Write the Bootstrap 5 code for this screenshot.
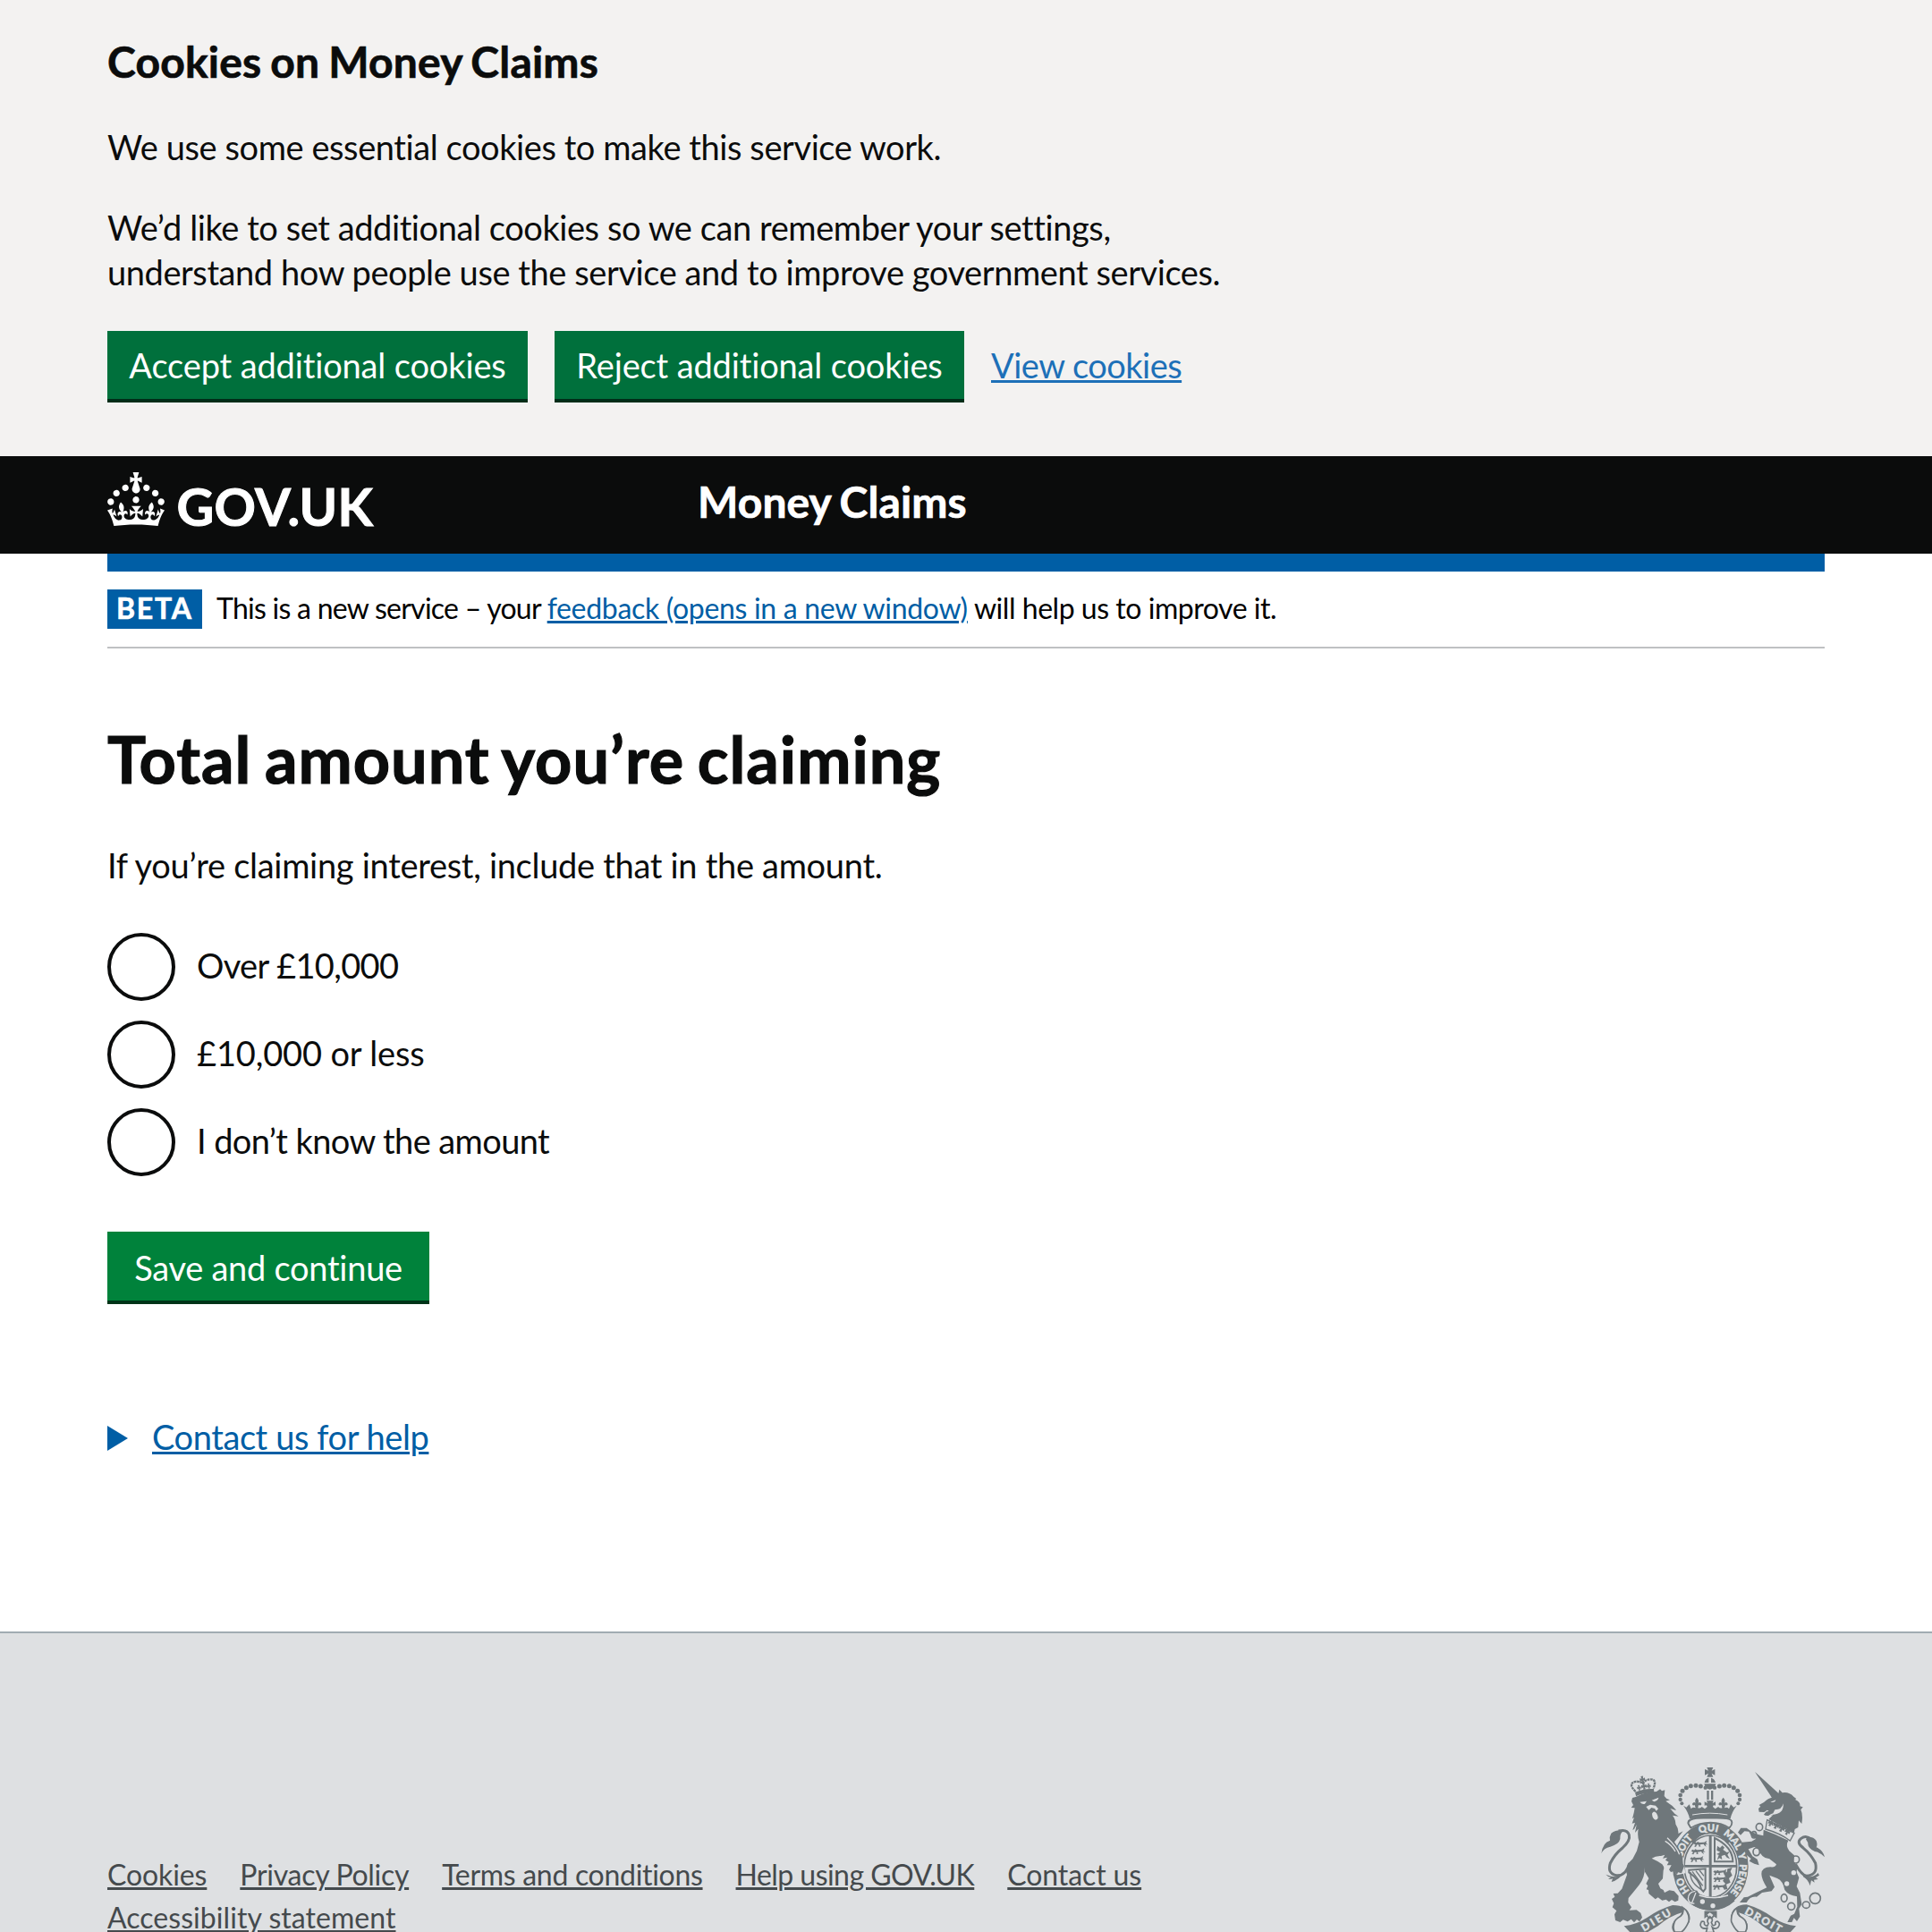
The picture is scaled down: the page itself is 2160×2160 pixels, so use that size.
<!DOCTYPE html>
<html lang="en">
<head>
<meta charset="utf-8">
<meta name="viewport" content="width=device-width, initial-scale=1">
<title>Total amount you’re claiming - Money Claims</title>
<link rel="stylesheet" href="https://cdn.jsdelivr.net/npm/bootstrap@5.3.0/dist/css/bootstrap.min.css">
<style>
  html, body { height: 2160px; overflow: hidden; }
  body { font-family: Lato, "Noto Sans", sans-serif; font-size: 38px; line-height: 50px; color: #0b0c0c; background: #fff; letter-spacing: -.42px; }
  p { margin: 0; }
  a { text-decoration-thickness: 3px; text-underline-offset: 2px; color: #005ea5; }
  .page-width { padding: 0 120px; }
  .cookie-area { background: #f3f2f1; height: 510px; padding-top: 39px; }
  .cookie-title { font-size: 48px; line-height: 60px; font-weight: 700; letter-spacing: .2px; word-spacing: -2px; margin: 0 0 40px; -webkit-text-stroke: .7px; }
  .cookie-copy { margin-bottom: 40px; }
  .cookie-actions { margin-top: 41px; gap: 30px; }
  .btn-gov { --bs-btn-color: #fff; --bs-btn-bg: #00703c; --bs-btn-hover-bg: #005a30; --bs-btn-hover-color: #fff; --bs-btn-border-radius: 0; --bs-btn-line-height: 50px; --bs-btn-font-size: 38px; border: 0; border-bottom: 4px solid #002d18; height: 80px; padding: 13px 0 13px; letter-spacing: -.14px; }
  .btn-accept { width: 470px; }
  .btn-reject { width: 458px; }
  .btn-save { --bs-btn-bg: #00823b; border-bottom-color: #003418; width: 360px; height: 81px; margin-top: 62px; padding: 15px 0 12px; letter-spacing: -.27px; }
  .view-link { color: #1d70b8; letter-spacing: -.52px; line-height: 50px; margin-top: 13px; }
  .gov-header { background: #0b0c0c; height: 109px; }
  .brand-col { width: 660px; padding-top: 18px; }
  .brand-col svg { overflow: visible; }
  .service-name { color: #fff; font-size: 48px; line-height: 60px; font-weight: 700; letter-spacing: .1px; word-spacing: -2px; padding-top: 21px; -webkit-text-stroke: .7px; }
  .blue-bar { height: 20px; background: #005ea5; }
  .phase-banner { padding: 20px 0; border-bottom: 2px solid #bfc1c3; font-size: 32px; line-height: 40px; color: #000; }
  .phase-banner p { padding-top: 1px; letter-spacing: -.46px; }
  .phase-tag { width: 106px; height: 44px; padding-top: 1px; background: #005ea5; color: #fff; font-weight: 700; letter-spacing: 1.8px; padding-left: 10px; margin-right: 16px; -webkit-text-stroke: .6px; }
  .phase-lead { letter-spacing: -.74px; }
  .phase-link { letter-spacing: -.32px; }
  .page-title { font-size: 72px; line-height: 80px; font-weight: 700; letter-spacing: 1px; word-spacing: -4px; margin: 83px 0 54px; -webkit-text-stroke: 1.2px; }
  .intro { letter-spacing: -.3px; margin-bottom: 51px; }
  .radio-stack { gap: 22px; }
  .radio-row { height: 76px; gap: 24px; }
  .radio-row .form-check-input { width: 76px; height: 76px; margin: 0; border: 4px solid #0b0c0c; background: #fff; flex: none; }
  .radio-row label { margin-bottom: 4px; }
  .label-over { letter-spacing: -.65px; }
  .label-less { letter-spacing: -.15px; }
  .label-unknown { letter-spacing: -.6px; }
  .help-row { margin-top: 123px; margin-bottom: 193px; }
  .help-row svg { margin-top: 4px; margin-right: 27px; }
  .gov-footer { background: #dee0e2; border-top: 2px solid #a1acb2; height: 336px; }
  .footer-nav { width: 1400px; padding-top: 246px; column-gap: 37px; font-size: 32px; line-height: 48px; letter-spacing: -.3px; }
  .footer-nav a { color: #454a4d; }
  .footer-nav .open-set { letter-spacing: -.1px; }
  .footer-nav .tight-set { letter-spacing: -.54px; }
  .footer-nav .wide-set { letter-spacing: .05px; }
  .crest { margin-top: 150px; overflow: visible; }
</style>
<script src="https://cdn.jsdelivr.net/npm/bootstrap@5.3.0/dist/js/bootstrap.bundle.min.js"></script>
</head>
<body>
<section class="cookie-area page-width" aria-label="Cookies on Money Claims">
  <h2 class="cookie-title">Cookies on Money Claims</h2>
  <p class="cookie-copy">We use some essential cookies to make this service work.</p>
  <p>We’d like to set additional cookies so we can remember your settings,<br>understand how people use the service and to improve government services.</p>
  <div class="cookie-actions d-flex align-items-start">
    <button class="btn btn-gov btn-accept" type="button">Accept additional cookies</button>
    <button class="btn btn-gov btn-reject" type="button">Reject additional cookies</button>
    <a class="view-link" href="#">View cookies</a>
  </div>
</section>

<header class="gov-header page-width d-flex align-items-start">
  <div class="brand-col">
    <svg class="d-block" width="304" height="66" viewBox="0 0 304 66" fill="#fff" role="img" aria-label="GOV.UK">
      <g transform="scale(2)"><path d="M22.6 10.4c-1 .4-2-.1-2.4-1-.4-.9.1-2 1-2.4.9-.4 2 .1 2.4 1s-.1 2-1 2.4m-5.9 6.7c-.9.4-2-.1-2.4-1-.4-.9.1-2 1-2.4.9-.4 2 .1 2.4 1s-.1 2-1 2.4m10.8-3.7c-1 .4-2-.1-2.4-1-.4-.9.1-2 1-2.4.9-.4 2 .1 2.4 1s0 2-1 2.4m3.3 4.8c-1 .4-2-.1-2.4-1-.4-.9.1-2 1-2.4.9-.4 2 .1 2.4 1s-.1 2-1 2.4M17 4.7l2.3 1.2V2.5l-2.3.7-.2-.2.9-3h-3.4l.9 3-.2.2c-.1.1-2.3-.7-2.3-.7v3.4L15 4.7c.1.1.1.2.2.2l-1.3 4c-.1.2-.1.4-.1.6 0 1.1.8 2 1.9 2.2h.7c1-.2 1.9-1.1 1.9-2.1 0-.2 0-.4-.1-.6l-1.3-4c-.1-.2 0-.2.1-.3m-7.6 5.7c.9.4 2-.1 2.4-1 .4-.9-.1-2-1-2.4-.9-.4-2 .1-2.4 1s0 2 1 2.4m-5 3c.9.4 2-.1 2.4-1 .4-.9-.1-2-1-2.4-.9-.4-2 .1-2.4 1s.1 2 1 2.4m-3.2 4.8c.9.4 2-.1 2.4-1 .4-.9-.1-2-1-2.4-.9-.4-2 .1-2.4 1s0 2 1 2.4m14.8 11c4.4 0 8.6.3 12.3.8 1.1-4.5 2.4-7 3.7-8.8l-2.5-.9c.2 1.3.3 1.9 0 2.7-.4-.4-.8-1.1-1.1-2.3l-1.2 4c.7-.5 1.3-.8 2-.9-1.1 2.5-2.6 3.1-3.5 3-1.1-.2-1.7-1.2-1.5-2.1.3-1.2 1.5-1.5 2.1-.1 1.1-2.3-.8-3-2-2.3 1.9-1.9 2.1-3.5.6-5.6-2.1 1.6-2.1 3.2-1.2 5.5-1.2-1.4-3.2-.6-2.5 1.6.9-1.4 2.1-.5 1.9.8-.2 1.1-1.7 2.1-3.5 1.9-2.7-.2-2.9-2.1-2.9-3.6.7-.1 1.9.5 2.9 1.9l.4-4.3c-1.1 1.1-2.1 1.4-3.2 1.4.4-1.2 2.1-3 2.1-3h-5.4s1.7 1.9 2.1 3c-1.1 0-2.1-.2-3.2-1.4l.4 4.3c1-1.4 2.2-2 2.9-1.9-.1 1.5-.2 3.4-2.9 3.6-1.9.2-3.4-.8-3.5-1.9-.2-1.3 1-2.2 1.9-.8.7-2.3-1.2-3-2.5-1.6.9-2.2.9-3.9-1.2-5.5-1.5 2-1.3 3.7.6 5.6-1.2-.7-3.1 0-2 2.3.6-1.4 1.8-1.1 2.1.1.2.9-.3 1.9-1.5 2.1-.9.2-2.4-.5-3.5-3 .6 0 1.2.3 2 .9l-1.2-4c-.3 1.1-.7 1.9-1.1 2.3-.3-.8-.2-1.4 0-2.7l-2.9.9C1.3 23 2.6 25.5 3.7 30c3.7-.5 7.9-.8 12.3-.8"/></g>
      <text x="77.5" y="60" font-family="Lato, sans-serif" font-weight="700" font-size="57.5" textLength="219" stroke="#fff" stroke-width="1">GOV.UK</text>
    </svg>
  </div>
  <div class="service-name">Money Claims</div>
</header>

<main class="page-width">
  <div class="blue-bar"></div>
  <div class="phase-banner d-flex align-items-start">
    <strong class="phase-tag">BETA</strong>
    <p><span class="phase-lead">This is a new service – your </span><a class="phase-link" href="#">feedback (opens in a new window)</a> will help us to improve it.</p>
  </div>
  <h1 class="page-title">Total amount you’re claiming</h1>
  <p class="intro">If you’re claiming interest, include that in the amount.</p>
  <form>
    <div class="radio-stack d-flex flex-column">
      <div class="radio-row d-flex align-items-center"><input class="form-check-input" type="radio" name="amount" id="over"><label class="label-over" for="over">Over £10,000</label></div>
      <div class="radio-row d-flex align-items-center"><input class="form-check-input" type="radio" name="amount" id="less"><label class="label-less" for="less">£10,000 or less</label></div>
      <div class="radio-row d-flex align-items-center"><input class="form-check-input" type="radio" name="amount" id="unknown"><label class="label-unknown" for="unknown">I don’t know the amount</label></div>
    </div>
    <button class="btn btn-gov btn-save d-block" type="button">Save and continue</button>
  </form>
  <div class="help-row d-flex align-items-center">
    <svg width="23" height="28" viewBox="0 0 23 28"><path d="M0 0L23 14L0 28z" fill="#005ea5"/></svg>
    <a href="#">Contact us for help</a>
  </div>
</main>

<footer class="gov-footer page-width d-flex justify-content-between align-items-start">
  <nav class="footer-nav d-flex flex-wrap">
    <a class="open-set" href="#">Cookies</a><a href="#">Privacy Policy</a><a href="#">Terms and conditions</a><a class="tight-set" href="#">Help using GOV.UK</a><a class="open-set" href="#">Contact us</a><a class="wide-set" href="#">Accessibility statement</a>
  </nav>
  <svg class="crest" width="250" height="184" viewBox="60 48 750 552" fill="#6f777b" role="img" aria-label="Royal coat of arms">
    <defs>
      <path id="garterLine" d="M427 498A98 118 0 0 1 427 262A98 118 0 0 1 427 498"/>
      <g id="halfCrown">
        <circle cx="410" cy="116" r="6.5"/><circle cx="394" cy="111" r="7.5"/><circle cx="378" cy="109" r="7.5"/><circle cx="361" cy="110" r="7.5"/><circle cx="346" cy="116" r="7.5"/><circle cx="333" cy="127" r="7.5"/><circle cx="326" cy="141" r="7"/><circle cx="326" cy="156" r="6.5"/><circle cx="331" cy="169" r="6"/>
        <path d="M336 176L346 182L356 172L362 187Q368 180 377 184L374 174Q366 178 366 170Q370 162 377 167Q373 157 381 149Q390 158 386 167Q394 162 397 171Q396 178 387 174L385 184Q392 186 398 180L408 187L416 180Q416 172 407 176L407 163L417 168L414 160H426V217Q390 216 357 220Q354 200 336 176z"/>
        <path d="M426 217Q380 215 359 223Q349 228 353 238L361 251" fill="none" stroke="#6f777b" stroke-width="5"/>
      </g>
      <g id="passant"><path d="M0 9L6 4L10 7L14 3L20 6L36 5L45 0L42 8L48 13L40 12L43 20L36 15L34 11L22 13L24 20L17 19L19 14L12 13L8 21L2 19L7 14z"/></g>
      <g id="bush"><path d="M-11-9L-3-6L-5-17H5L3-6L11-9V5L3 2L5 12H-5L-3 2L-11 5z"/></g>
    </defs>
    <!-- imperial crown -->
    <use href="#halfCrown"/><use href="#halfCrown" transform="matrix(-1 0 0 1 851 0)"/>
    <path d="M415 48H436L431 59L442 54V74L431 68L436 80H415L420 68L408 74V54L420 59z"/>
    <path d="M407 99Q409 86 421 83V99zM429 83Q441 86 444 99H429zM406 103H445Q441 121 425 122Q410 121 406 103zM415 126H422V157H415zM429 126H436V157H429z"/>
    <path d="M366 207Q425 196 484 207" fill="none" stroke="#dee0e2" stroke-width="3"/>
    <!-- garter and shield -->
    <ellipse cx="427" cy="380" rx="127" ry="147"/>
    <ellipse cx="427" cy="380" rx="94" ry="110" fill="#dee0e2"/>
    <ellipse cx="427" cy="380" rx="88" ry="104" fill="none" stroke="#6f777b" stroke-width="5"/>
    <path d="M339 375H515V383H339zM422 276H431V484H422z"/>
    <path d="M366 250Q395 232 427 232T488 250L500 238Q503 220 470 220L427 216L384 220Q352 220 353 238z" fill="#dee0e2"/>
    <path d="M361 251Q390 233 427 233T490 251Q501 241 498 229Q494 219 470 219L427 217L380 219Q351 224 353 236z" fill="none" stroke="#6f777b" stroke-width="5"/>
    <path d="M348 279Q380 234 427 234T507 279L485 304Q462 273 427 270T368 304z"/>
    <g fill="#dee0e2" stroke="#dee0e2" stroke-width="1.4" font-family="Lato, sans-serif" font-weight="900" font-size="33" letter-spacing="0">
      <text><textPath href="#garterLine" startOffset="12%">HO</textPath></text>
      <text><textPath href="#garterLine" startOffset="29.5%">SOIT</textPath></text>
      <text><textPath href="#garterLine" startOffset="44.5%">QUI</textPath></text>
      <text><textPath href="#garterLine" startOffset="56.4%">MAL</textPath></text>
      <text><textPath href="#garterLine" startOffset="68.7%">Y</textPath></text>
      <text><textPath href="#garterLine" startOffset="74%">PENSE</textPath></text>
    </g>
    <use href="#passant" x="370" y="294"/><use href="#passant" x="362" y="319"/><use href="#passant" x="358" y="345"/>
    <use href="#passant" x="436" y="389"/><use href="#passant" x="436" y="412"/><use href="#passant" x="434" y="438"/>
    <path d="M484 388L500 384L494 397L500 410L489 420L494 434L480 440L484 456L472 458L477 438L468 428L479 418L472 405L482 400z"/>
    <path d="M438 280V367H505Q507 313 438 280zM444 290Q496 316 499 361H444z" fill-rule="evenodd"/>
    <path d="M450 311L459 318L467 310L474 317L469 324L482 333L491 330L484 341L492 355L482 350L475 341L464 345L466 357L457 352L449 359L455 341L447 339L460 332L448 326z"/>
    <path d="M355 392L410 388V455L403 464L396 457Q392 426 355 400z" fill="none" stroke="#6f777b" stroke-width="6"/>
    <path d="M366 397L401 445M378 395L402 427M390 393L405 412M360 399Q357 435 399 459" fill="none" stroke="#6f777b" stroke-width="4"/>
    <path d="M350 475Q362 456 382 461L392 477Q430 493 483 483L509 496Q473 529 427 527Q393 527 357 504z"/>
    <path d="M376 463Q352 466 352 489Q356 507 373 504M378 468L365 502M389 477Q435 493 486 477" fill="none" stroke="#dee0e2" stroke-width="4"/>
    <circle cx="400" cy="498" r="8" fill="#dee0e2"/><circle cx="435" cy="512" r="8" fill="#dee0e2"/>
    <!-- lion -->
    <path d="M303 302L335 350L343 403L315 409L284 360z" fill="#dee0e2"/>
    <path d="M162 162L165 150L176 147Q207 129 246 129L258 121L264 127L274 124L272 144L280 153L291 157L277 161L299 177L313 192L292 186L307 203L320 212L300 209Q311 224 310 238Q321 255 319 270L335 262L320 281L306 298L320 319L333 347L335 371L339 379L330 403L318 400L315 407L305 396L294 399L288 391L296 376L281 376L287 365L276 359L282 350L267 353L274 341L261 345Q243 344 230 353Q253 363 265 373Q274 384 269 393L267 421L252 438L259 454L269 459L273 468L289 460L305 463L320 479L319 494L308 499L297 492L288 499L278 491L265 494L251 484L242 490L220 471L219 459L212 457L217 445L211 438L220 420L207 398L207 383Q207 417 188 442Q166 470 152 486L151 501L162 517L155 527L179 526L193 536L198 551L189 565L180 558L171 568L161 557L149 565L134 559L124 567L108 561L105 541L112 529L98 517L103 504L96 489L106 482L101 471L116 470L130 455L147 408L144 396L151 370L166 355L180 328L188 298Q181 279 185 254L174 267L179 240L171 255L166 258L174 233L164 236L171 216L165 220L170 200L173 184L161 183L168 174z"/>
    <g fill="#dee0e2"><path d="M190 164L213 161L207 170Q199 173 190 164zM230 158L253 149Q252 158 238 163zM211 180L225 173L243 176L252 187L245 194L240 186L229 183L220 191zM231 203Q237 190 246 202Q257 222 243 224Q232 220 231 203z"/></g>
    <path d="M275 295Q297 308 309 330M282 284Q314 314 323 340" stroke="#dee0e2" stroke-width="4" fill="none"/>
    <path d="M155 369Q144 413 111 410Q80 403 91 369Q105 340 132 318Q159 293 154 274Q148 254 119 261" fill="none" stroke="#6f777b" stroke-width="9"/>
    <path d="M132 257Q104 258 94 269Q87 280 90 293Q66 299 61 337Q69 318 91 314Q120 306 124 288Q123 270 132 263zM131 409Q110 421 76 407Q85 417 93 417L84 423Q94 424 99 421L95 432Q120 425 137 401z"/>
    <g transform="rotate(-10 203 112)">
      <path d="M171 126Q203 118 235 126L234 140Q203 132 172 140z"/>
      <path d="M173 124Q151 92 179 91Q193 92 202 101Q211 91 227 92Q253 94 234 124" fill="none" stroke="#6f777b" stroke-width="7" stroke-dasharray="8 2"/>
      <use href="#bush" transform="translate(203 90) scale(.8)"/><use href="#bush" transform="translate(187 115) scale(.6)"/><use href="#bush" transform="translate(204 113) scale(.8)"/><use href="#bush" transform="translate(220 115) scale(.6)"/>
    </g>
    <!-- unicorn -->
    <path d="M576 63L583 69L658 137L651 148L633 151L628 142zM658 122L668 133Q690 129 706 146L715 153L711 156Q730 164 727 178L737 181L730 190Q738 207 733 237L723 226L721 249L710 255L707 267L622 222L637 207Q613 213 606 206L613 197L623 194L617 191L607 198L590 197L588 186L595 179L590 174Q608 166 616 157Q626 149 653 145z"/>
    <path d="M628 164L646 157Q643 168 628 164zM643 190Q667 190 671 169Q675 204 633 207L618 221Q620 206 637 202z" fill="#dee0e2"/>
    <path d="M617 224L708 268L694 294Q661 269 612 255z" fill="#dee0e2" stroke="#6f777b" stroke-width="4"/>
    <g transform="rotate(28 660 256)"><use href="#bush" transform="translate(623 253) scale(.8)"/><use href="#bush" transform="translate(643 251) scale(.9)"/><use href="#bush" transform="translate(664 251) scale(.9)"/><use href="#bush" transform="translate(686 252) scale(.8)"/></g>
    <path d="M605 257Q647 272 688 293Q678 310 691 328L708 343L707 365L718 378L716 400L724 418L716 447L727 469L733 507L724 522L727 548L717 564L707 553L700 567H685L696 545L708 539L718 515L717 481Q688 477 676 459Q670 428 651 420L625 410L642 449L632 463L600 468L582 482Q560 479 548 501H525L539 484L552 482L574 471L599 459L616 451Q598 422 598 405Q599 382 628 382Q646 384 648 373L624 354Q599 355 588 322L574 315L554 322L568 346L584 356L590 376L574 371L557 362L563 354L545 339L541 320L529 306L533 299L565 296L580 287L564 278L556 263L541 262L528 275L519 266L529 251H548L567 265L584 272L604 277z"/>
    <g fill="#dee0e2"><circle cx="706" cy="401" r="8"/><circle cx="683" cy="438" r="8"/></g>
    <path d="M712 372Q733 410 749 412Q788 409 779 369Q763 338 739 319Q713 300 731 286Q748 273 766 290" fill="none" stroke="#6f777b" stroke-width="9"/>
    <path d="M752 281Q774 280 782 294Q787 307 782 316Q805 325 810 349Q794 332 777 330Q752 318 754 301L747 289zM737 407Q763 425 788 402L792 410L780 417L788 423L774 425L776 434L765 427L761 445Q754 423 738 415z"/>
    <g fill="none" stroke="#6f777b" stroke-width="5"><ellipse cx="591" cy="248" rx="11" ry="12"/><ellipse cx="573" cy="274" rx="8" ry="11"/><ellipse cx="581" cy="331" rx="11" ry="13"/><circle cx="713" cy="357" r="12"/><ellipse cx="674" cy="486" rx="10" ry="13"/><circle cx="698" cy="514" r="12"/><ellipse cx="748" cy="509" rx="12" ry="11"/><circle cx="778" cy="487" r="18"/></g>
    <!-- scroll and motto -->
    <path d="M137 580Q177 576 214 552Q255 523 300 510Q351 510 358 548Q361 565 350 574L332 600H303Q291 582 305 563Q325 552 331 535Q292 545 251 580L210 604H160zM714 580Q674 576 638 552Q594 521 548 508Q500 510 496 548Q492 565 505 574L518 600H546Q558 581 546 563Q528 552 522 535Q566 548 602 580L638 604H692z"/>
    <path d="M334 518Q340 535 327 547Q307 558 305 571Q300 586 307 600H330Q344 589 354 565Q358 534 334 518zM518 518Q512 535 525 547Q545 558 547 571Q552 586 544 600H521Q507 589 497 565Q494 534 518 518z" fill="#dee0e2" stroke="#6f777b" stroke-width="5"/>
    <g fill="#dee0e2" stroke="#dee0e2" stroke-width="1" font-family="Lato, sans-serif" font-weight="900" font-size="36"><text transform="translate(204 599) rotate(-31)" textLength="109">DIEU</text><text transform="translate(539 538) rotate(29)" textLength="135">DROIT</text></g>
    <path d="M409 532H446V550L438 545L432 553H421L416 545L409 550zM425 548Q412 560 420 571L417 579Q409 580 406 573Q409 562 397 565Q388 580 401 587Q414 591 417 584L412 602H439L433 584Q443 593 453 584Q462 570 450 564Q441 565 444 574Q438 582 433 575L430 568Q438 558 425 548z" fill="#dee0e2" stroke="#6f777b" stroke-width="5"/>
    <path d="M410 532H445V546L435 542L425 534L416 542L410 546z"/>
  </svg>
</footer>
</body>
</html>
